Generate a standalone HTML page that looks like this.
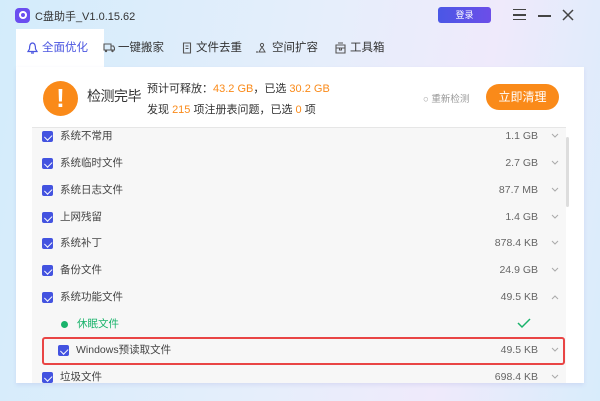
<!DOCTYPE html>
<html><head><meta charset="utf-8"><style>
*{margin:0;padding:0;box-sizing:border-box}
body{width:600px;height:401px;overflow:hidden;font-family:"Liberation Sans","Noto Sans CJK SC",sans-serif;background:linear-gradient(100deg,#d3ecfb 0%,#e6eefb 50%,#efeafb 75%,#d8ecfb 100%);position:relative;color:#333}
.abs{position:absolute}
.tab{position:absolute;top:29px;height:38px;font-size:11.5px;line-height:38px;color:#333}
.ic{position:absolute;top:29px;height:38px;line-height:38px;font-size:11px;color:#444}
.row{position:absolute;left:32px;width:534px;height:27px;font-size:10.5px;line-height:27px;color:#444}
.cb{position:absolute;left:10px;top:8px;width:11px;height:11px;background:#4353e0;border-radius:2px}
.cb:after{content:"";position:absolute;left:3.5px;top:1.5px;width:3.5px;height:5.5px;border:solid #fff;border-width:0 1.3px 1.3px 0;transform:rotate(45deg)}
.nm{position:absolute;left:28px;top:0}
.sz{position:absolute;right:28px;top:0;color:#666}
.ch{position:absolute;right:7px;top:10px}
</style></head><body>
<div class="abs" style="left:15px;top:8px;width:15px;height:15px;border-radius:4px;background:#6a4ef0"></div>
<div class="abs" style="left:19px;top:11px;width:8px;height:8px;border:2px solid #fff;border-radius:50%"></div>
<div class="abs" style="left:35px;top:8px;font-size:11px;color:#333">C盘助手_V1.0.15.62</div>
<div class="abs" style="left:438px;top:7px;width:53px;height:16px;border-radius:3px;background:linear-gradient(90deg,#4a57e6,#6c4ee8);color:#fff;font-size:9px;text-align:center;line-height:16px">登录</div>
<div class="abs" style="left:513px;top:9px;width:13px;height:11px;border-top:1.5px solid #444;border-bottom:1.5px solid #444"></div>
<div class="abs" style="left:513px;top:14px;width:13px;height:1.5px;background:#444"></div>
<div class="abs" style="left:538px;top:15px;width:13px;height:1.5px;background:#444"></div>
<svg class="abs" style="left:562px;top:9px" width="12" height="12"><path d="M1 1L11 11M11 1L1 11" stroke="#444" stroke-width="1.5"/></svg>
<div class="abs" style="left:16px;top:29px;width:88px;height:40px;background:#fff"></div>
<div class="abs" style="left:16px;top:67px;width:568px;height:316px;background:#fff;box-shadow:0 2px 4px rgba(150,150,220,.2)"></div>
<svg class="abs" style="left:27px;top:42px" width="11" height="12"><path d="M5.5 1C3 1 2.5 4 2.5 7L1 9.5H10L8.5 7C8.5 4 8 1 5.5 1ZM4 11H7" stroke="#4a55e0" fill="none" stroke-width="1.2"/></svg>
<div class="tab" style="left:42px;color:#4a55e0">全面优化</div>
<svg class="abs" style="left:103px;top:42px" width="12" height="11"><path d="M1 2H8V8H1ZM8 4H10.5L11.5 6V8H8" stroke="#555" fill="none" stroke-width="1.1"/><circle cx="3" cy="9" r="1.2" fill="#555"/><circle cx="9.5" cy="9" r="1.2" fill="#555"/></svg>
<div class="tab" style="left:118px">一键搬家</div>
<svg class="abs" style="left:182px;top:42px" width="10" height="12"><path d="M1.5 1H8.5V11H1.5ZM3.5 4H6.5M3.5 6.5H6.5" stroke="#555" fill="none" stroke-width="1.1"/></svg>
<div class="tab" style="left:196px">文件去重</div>
<svg class="abs" style="left:256px;top:42px" width="12" height="12"><circle cx="6" cy="3" r="1.6" stroke="#555" fill="none"/><path d="M6 5L3 10H9Z" stroke="#555" fill="none"/><circle cx="1" cy="10" r="0.9" fill="#555"/></svg>
<div class="tab" style="left:272px">空间扩容</div>
<svg class="abs" style="left:335px;top:42px" width="11" height="12"><path d="M1 3H10V11H1ZM3 1H8M1 6H10M4.5 6V8H6.5V6" stroke="#555" fill="none" stroke-width="1.1"/></svg>
<div class="tab" style="left:350px">工具箱</div>
<div class="abs" style="left:43px;top:81px;width:35px;height:35px;border-radius:50%;background:#fa8a19;color:#fff;font-size:26px;font-weight:bold;text-align:center;line-height:35px">!</div>
<div class="abs" style="left:87px;top:86px;font-size:14px;color:#333;letter-spacing:-0.5px">检测完毕</div>
<div class="abs" style="left:147px;top:80px;font-size:11px;color:#333">预计可释放：<span style="color:#fa8a19">43.2 GB</span>，已选 <span style="color:#fa8a19">30.2 GB</span></div>
<div class="abs" style="left:147px;top:101px;font-size:11px;color:#333">发现 <span style="color:#fa8a19">215</span> 项注册表问题，已选 <span style="color:#fa8a19">0</span> 项</div>
<div class="abs" style="left:423px;top:91px;font-size:9.5px;color:#999">○ 重新检测</div>
<div class="abs" style="left:486px;top:84px;width:73px;height:26px;border-radius:13px;background:#fa8a19;color:#fff;font-size:12px;text-align:center;line-height:26px">立即清理</div>
<div class="abs" style="left:32px;top:127px;width:534px;height:256px;background:#f7f7f7;border-top:1px solid #e6e6e6"></div>
<div class="abs" style="left:566px;top:137px;width:3px;height:70px;background:#ddd;border-radius:2px"></div>
<svg width="0" height="0" style="position:absolute"><defs><path id="dn" d="M1 1L4 4L7 1" stroke="#aaa" fill="none" stroke-width="1"/></defs></svg>
<div class="row" style="top:123px"><div class="cb"></div><div class="nm">系统不常用</div><div class="sz">1.1 GB</div><svg class="ch" width="8" height="6"><use href="#dn"/></svg></div>
<div class="row" style="top:150px"><div class="cb"></div><div class="nm">系统临时文件</div><div class="sz">2.7 GB</div><svg class="ch" width="8" height="6"><use href="#dn"/></svg></div>
<div class="row" style="top:177px"><div class="cb"></div><div class="nm">系统日志文件</div><div class="sz">87.7 MB</div><svg class="ch" width="8" height="6"><use href="#dn"/></svg></div>
<div class="row" style="top:204px"><div class="cb"></div><div class="nm">上网残留</div><div class="sz">1.4 GB</div><svg class="ch" width="8" height="6"><use href="#dn"/></svg></div>
<div class="row" style="top:230px"><div class="cb"></div><div class="nm">系统补丁</div><div class="sz">878.4 KB</div><svg class="ch" width="8" height="6"><use href="#dn"/></svg></div>
<div class="row" style="top:257px"><div class="cb"></div><div class="nm">备份文件</div><div class="sz">24.9 GB</div><svg class="ch" width="8" height="6"><use href="#dn"/></svg></div>
<div class="row" style="top:284px"><div class="cb"></div><div class="nm">系统功能文件</div><div class="sz">49.5 KB</div><svg class="ch" width="8" height="6"><path d="M1 5L4 2L7 5" stroke="#aaa" fill="none"/></svg></div>
<div class="row" style="top:311px"><div class="abs" style="left:29px;top:10px;width:7px;height:7px;border-radius:50%;background:#19b36b"></div><div class="nm" style="left:45px;color:#19b36b">休眠文件</div><svg class="abs" style="right:35px;top:7px" width="14" height="11"><path d="M1 5L5 9L13 1" stroke="#19b36b" fill="none" stroke-width="1.5"/></svg></div>
<div class="abs" style="left:42px;top:337px;width:523px;height:28px;border:2px solid #e94545;border-radius:3px"></div>
<div class="row" style="top:337px"><div class="cb" style="left:26px"></div><div class="nm" style="left:44px">Windows预读取文件</div><div class="sz">49.5 KB</div><svg class="ch" width="8" height="6"><use href="#dn"/></svg></div>
<div class="row" style="top:364px"><div class="cb"></div><div class="nm">垃圾文件</div><div class="sz">698.4 KB</div><svg class="ch" width="8" height="6"><use href="#dn"/></svg></div>
</body></html>
